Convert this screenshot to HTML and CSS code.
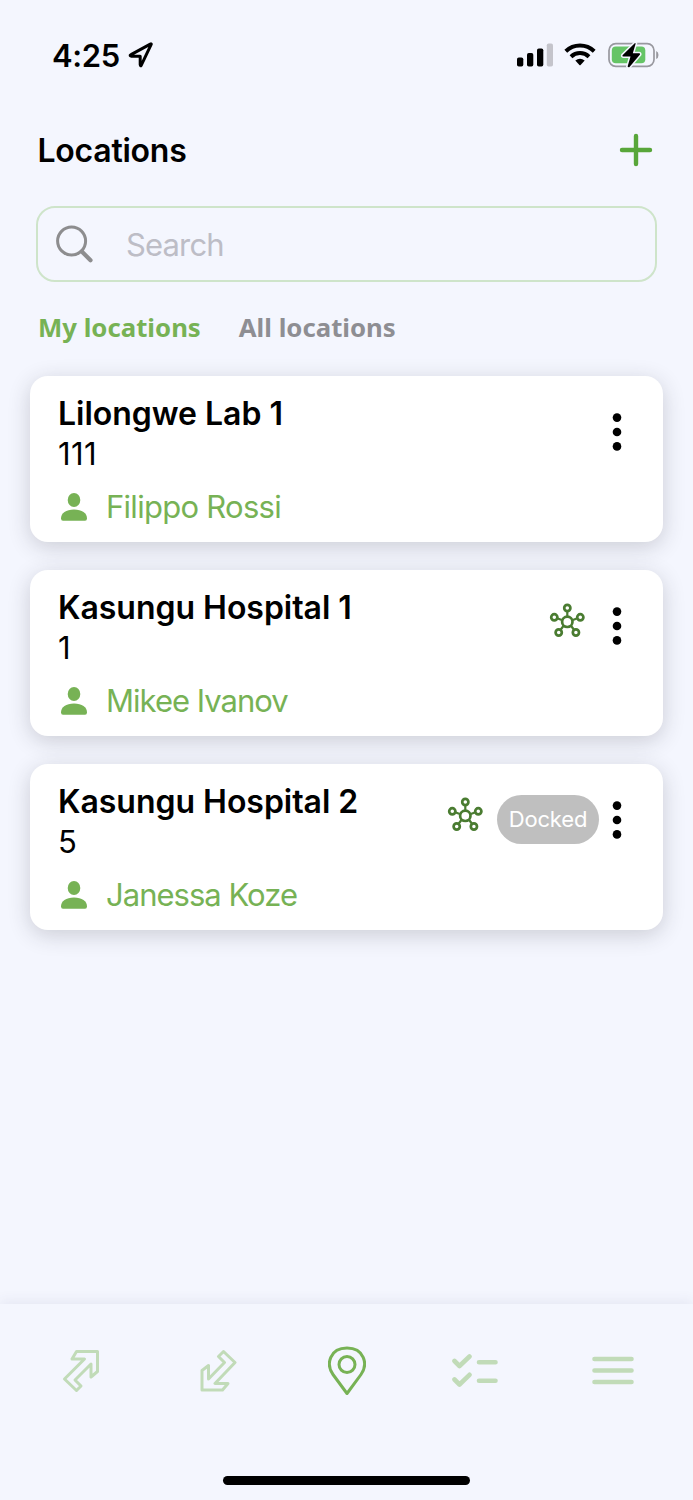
FILE: index.html
```html
<!DOCTYPE html>
<html lang="en">
<head>
<meta charset="utf-8">
<title>Locations</title>
<link rel="stylesheet" href="styles.css">
</head>
<body>
<svg width="0" height="0" class="defs" aria-hidden="true">
  <symbol id="user" viewBox="0 0 28 30"><ellipse cx="14" cy="8" rx="6.300" ry="7"/><path d="M1 26.200C1 21.200 6 17.400 14 17.400S27 21.200 27 26.200Q27 28.800 25 28.800H3Q1 28.800 1 26.200Z"/></symbol>
  <symbol id="dots" viewBox="0 0 10 38"><circle cx="5" cy="4.600" r="4.300"/><circle cx="5" cy="19" r="4.300"/><circle cx="5" cy="33.400" r="4.300"/></symbol>
  <symbol id="hub" viewBox="0 0 36 36"><g fill="none" stroke="#4a7c31"><path stroke-width="2.200" d="M18.300 8V13M8.800 15.500L12.800 17M27.800 15.500L23.800 17M14.800 22.500L11.800 26.500M21.800 22.500L24.800 26.500"/><g stroke-width="2.700"><circle cx="18.300" cy="18.800" r="5.200"/><circle cx="18.300" cy="5" r="3.100"/><circle cx="5.300" cy="14.300" r="3.100"/><circle cx="31.300" cy="14.300" r="3.100"/><circle cx="9.700" cy="29.500" r="3.100"/><circle cx="26.900" cy="29.500" r="3.100"/></g></g></symbol>
</svg>
<div class="screen">
  <div class="status">
    <div class="clock"><span class="time">4:25</span>
      <svg width="26" height="26" viewBox="0 0 26 26"><path d="M23.200 2.300L13.200 23.300Q12.400 24.500 12.200 22.700V14.200H3.500Q1 13.600 3 12.600L22.300 2.100Q23.600 1.500 23.200 2.300Z" fill="none" stroke="#000" stroke-width="3" stroke-linejoin="round"/></svg>
    </div>
    <div class="signals">
      <svg width="36" height="24" viewBox="0 0 36 24"><rect y="14.500" width="6.300" height="9" rx="1.800"/><rect x="10" y="10" width="6.300" height="13.500" rx="1.800"/><rect x="20" y="5.500" width="6.300" height="18" rx="1.800"/><rect x="29.800" y=".5" width="6.200" height="23" rx="1.800" fill="#c4c4cb"/></svg>
      <svg class="wifi" width="32" height="24" viewBox="0 0 32 24"><g fill="none" stroke="#000" stroke-width="4"><path d="M1.800 8.300A20.300 20.300 0 0 1 30.200 8.300"/><path d="M7 13.700A13 13 0 0 1 25 13.700"/></g><path d="M11.300 17.400Q16 13.900 20.700 17.400L16.600 22Q16 22.600 15.400 22Z"/></svg>
      <svg width="51" height="26" viewBox="0 0 51 26"><rect x="1" y="1.700" width="45" height="22.600" rx="6.800" fill="none" stroke="#98989f" stroke-width="1.700"/><rect x="3.800" y="4.600" width="33.500" height="16.700" rx="4" fill="#65c466"/><path d="M48.200 8.900Q50.500 10 50.500 13T48.200 17Z" fill="#98989f"/><path d="M27 1L14.500 13.200Q14 14.500 15.500 14.500H22.500L19.600 24.600Q20.500 26 21.700 24.700L32 12.600Q32.400 11.300 31 11.300H24.800L27.700 1.400Z" stroke="#f4f6fe" stroke-width="3" paint-order="stroke"/></svg>
    </div>
  </div>
  <header class="header">
    <h1>Locations</h1>
    <svg width="34" height="34" viewBox="0 0 34 34"><path d="M3 17H31M17 3V31" stroke="#58a63a" stroke-width="4.400" stroke-linecap="round"/></svg>
  </header>
  <div class="search">
    <svg width="40" height="40" viewBox="0 0 40 40" fill="none" stroke="#8d8d8f"><circle cx="17.600" cy="17" r="14" stroke-width="3"/><path d="M27.800 27.500L36.500 36.300" stroke-width="4.200" stroke-linecap="round"/></svg>
    <span>Search</span>
  </div>
  <div class="tabs"><span class="tab active">My locations</span><span class="tab">All locations</span></div>
  <main class="cards">
    <article class="card">
      <div class="info"><h2>Lilongwe Lab 1</h2><p class="num">111</p><div class="owner"><svg width="28" height="30"><use href="#user"/></svg><span class="wide">Filippo Rossi</span></div></div>
      <div class="actions"><svg width="10" height="38"><use href="#dots"/></svg></div>
    </article>
    <article class="card">
      <div class="info"><h2>Kasungu Hospital 1</h2><p class="num">1</p><div class="owner"><svg width="28" height="30"><use href="#user"/></svg><span>Mikee Ivanov</span></div></div>
      <div class="actions"><svg class="hub" width="36" height="36"><use href="#hub"/></svg><svg class="solo" width="10" height="38"><use href="#dots"/></svg></div>
    </article>
    <article class="card">
      <div class="info"><h2>Kasungu Hospital 2</h2><p class="num">5</p><div class="owner"><svg width="28" height="30"><use href="#user"/></svg><span>Janessa Koze</span></div></div>
      <div class="actions"><svg class="hub" width="36" height="36"><use href="#hub"/></svg><span class="badge">Docked</span><svg width="10" height="38"><use href="#dots"/></svg></div>
    </article>
  </main>
  <nav class="nav">
    <div class="items">
      <svg width="38" height="44" viewBox="0 0 38 44"><path d="M14.500 2.500H35.500V22.500L29 28V15L13 31L19 37L14.500 41.500L2.500 30L22.500 10H10Z"/></svg>
      <svg class="receive" width="38" height="44" viewBox="0 0 38 44"><path d="M24.500 2.500L36 13.500L16 34.500H29L23.500 41H3V21.500L9.500 16.500V30L25.500 13.500L19.500 7.500Z"/></svg>
      <svg class="pin" width="38" height="50" viewBox="0 0 38 50"><path d="M19 47.500L5 28.500C-2.500 18 2 2 19 2S40.500 18 33 28.500Z"/><circle cx="19" cy="18.500" r="8"/></svg>
      <svg class="checks" width="46" height="34" viewBox="0 0 46 34"><path d="M2.500 7L7.500 12L17.500 2.500M2.500 25.500L7.500 30.500L17.500 20.800M27 8.200H43.500M27 26.800H43.500"/></svg>
      <svg class="menu" width="42" height="30" viewBox="0 0 42 30"><path d="M2.500 3H39.500M2.500 14.500H39.500M2.500 26H39.500"/></svg>
    </div>
    <div class="home"></div>
  </nav>
</div>
</body>
</html>
```
FILE: styles.css
```css
* { box-sizing: border-box; }
body { margin: 0; background: #f4f6fe; color: #000; font-family: Inter, sans-serif; }
h1, h2, p { margin: 0; }
svg { display: block; flex: none; }
.defs { display: none; }
.screen { display: flex; flex-direction: column; height: 1500px; width: 693px; }
.status { display: flex; justify-content: space-between; height: 110px; padding: 0 34px 0 52px; align-items: center; }
.clock { display: flex; align-items: center; gap: 8px; }
.time { font-size: 31px; font-weight: 600; letter-spacing: -.4px; }
.signals { display: flex; align-items: center; gap: 12px; }
.wifi { margin-left: -1px; }
.header { display: flex; align-items: center; justify-content: space-between; height: 80px; padding: 0 40.500px 0 37.500px; }
h1 { font-size: 32px; font-weight: 600; letter-spacing: -.25px; }
.search { margin: 16px 36px 0; height: 76px; border: 2px solid #cee4ca; border-radius: 19px; display: flex; align-items: center; padding-left: 16px; gap: 32px; color: #bdbdc6; font-size: 31px; letter-spacing: -.85px; }
.tabs { display: flex; gap: 38px; padding: 0 38px 4px; height: 94.400px; align-items: center; font-family: "Noto Sans", sans-serif; font-size: 25.750px; font-weight: 700; color: #8e8e93; }
.active { color: #77b255; }
.tab { white-space: nowrap; }
.cards { display: flex; flex-direction: column; gap: 28px; padding: 0 30px; flex: 1; }
.card { display: flex; justify-content: space-between; align-items: flex-start; height: 166px; padding: 18px 41px 0 28px; border-radius: 18px; background: #fff; box-shadow: 0 5px 22px rgba(40, 40, 50, .2); }
h2 { font-size: 32px; line-height: 39.500px; font-weight: 600; letter-spacing: -.03px; }
.num { font-size: 31px; line-height: 39.500px; letter-spacing: .4px; }
.owner { display: flex; align-items: center; gap: 18px; margin-top: 13.500px; padding-left: 2px; font-size: 31px; line-height: 39.500px; letter-spacing: -.98px; color: #77b255; fill: #77b255; }
.wide { letter-spacing: -.72px; }
.actions { display: flex; align-items: center; height: 48px; margin-top: 13.500px; }
.hub { margin: -9px 14px 0 0; }
.solo { margin-left: 13px; }
.badge { width: 102px; height: 49px; margin-right: 13px; border-radius: 25px; background: #bfbfbf; color: #fff; font-size: 22px; line-height: 49px; letter-spacing: -.15px; text-align: center; }
.nav { height: 196.500px; box-shadow: 0 -3px 12px rgba(60, 70, 110, .08); background: #f4f6fe; }
.items { display: flex; align-items: center; height: 134px; padding: 0 59px 0 62px; fill: none; stroke: #c1dbb8; stroke-width: 3; stroke-linejoin: round; stroke-linecap: round; }
.receive { margin-left: 99px; }
.pin { margin-left: 91px; stroke: #77b255; }
.checks { margin-left: 86px; }
.menu { margin-left: 94px; }
.checks, .menu { stroke-width: 4.600; }
.home { width: 247px; height: 9px; margin: 38px auto 0; border-radius: 5px; background: #000; }
```
